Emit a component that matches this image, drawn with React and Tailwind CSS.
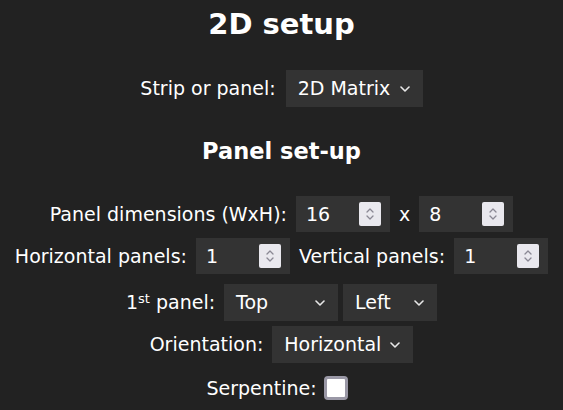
const Chevron = () => (
  <svg width="10" height="6" viewBox="0 0 10 6" className="shrink-0">
    <path d="M1 1l4 4 4-4" fill="none" stroke="#e8e8e8" strokeWidth="1.6" strokeLinecap="round" strokeLinejoin="round" />
  </svg>
);

const Select = ({ value, width }) => (
  <div className={`flex h-[37px] items-center justify-between bg-[#333333] pl-[12px] pr-[13px] ${width}`}>
    <span>{value}</span>
    <Chevron />
  </div>
);

const NumberInput = ({ value }) => (
  <div className="flex h-[36px] w-[94px] items-center justify-between bg-[#333333] pl-[10px] pr-[9px]">
    <span>{value}</span>
    <div className="flex h-[24px] w-[22px] items-center justify-center rounded-[2px] bg-[#e9e8ee]">
      <svg width="10" height="16" viewBox="0 0 10 16">
        <path d="M2 6l3-3 3 3M2 10l3 3 3-3" fill="none" stroke="#8a8894" strokeWidth="1.3" strokeLinecap="round" strokeLinejoin="round" />
      </svg>
    </div>
  </div>
);

export default function App() {
  return (
    <div className="h-[410px] w-[563px] overflow-hidden bg-[#222222] text-[19px] text-white font-['DejaVu_Sans',sans-serif]">
      <div className="flex h-[50px] items-center justify-center text-[29px] font-bold">2D setup</div>

      <div className="mt-[20px] flex items-center justify-center gap-[10px]">
        <span>Strip or panel:</span>
        <Select value="2D Matrix" width="w-[137px]" />
      </div>

      <div className="mt-[30px] flex h-[30px] items-center justify-center text-[22.5px] font-bold">Panel set-up</div>

      <div className="mt-[29px] flex items-center justify-center gap-[9px]">
        <span>Panel dimensions (WxH):</span>
        <NumberInput value="16" />
        <span>x</span>
        <NumberInput value="8" />
      </div>

      <div className="mt-[6px] flex items-center justify-center gap-[9px]">
        <span>Horizontal panels:</span>
        <NumberInput value="1" />
        <span>Vertical panels:</span>
        <NumberInput value="1" />
      </div>

      <div className="mt-[10px] flex items-center justify-center">
        <span className="mr-[9px]">
          1<sup className="text-[13px]">st</sup> panel:
        </span>
        <Select value="Top" width="w-[114px]" />
        <div className="ml-[5px]">
          <Select value="Left" width="w-[94px]" />
        </div>
      </div>

      <div className="mt-[5px] flex items-center justify-center gap-[9px]">
        <span>Orientation:</span>
        <Select value="Horizontal" width="w-[141px]" />
      </div>

      <div className="mt-[11px] flex items-center justify-center gap-[7px]">
        <span>Serpentine:</span>
        <span className="mr-[9px] h-[24px] w-[24px] rounded-[4px] border-[3px] border-[#9a98a6] bg-white" />
      </div>
    </div>
  );
}
